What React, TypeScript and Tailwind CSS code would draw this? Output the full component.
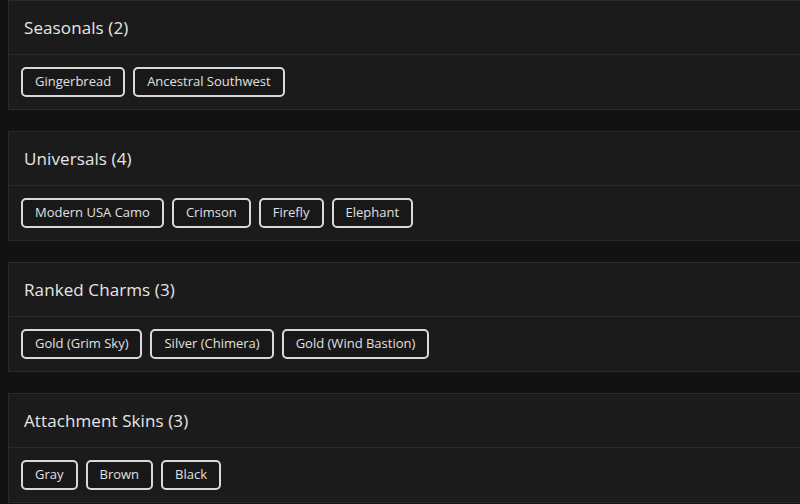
import React from "react";

const sections: { title: string; items: string[] }[] = [
  { title: "Seasonals (2)", items: ["Gingerbread", "Ancestral Southwest"] },
  { title: "Universals (4)", items: ["Modern USA Camo", "Crimson", "Firefly", "Elephant"] },
  { title: "Ranked Charms (3)", items: ["Gold (Grim Sky)", "Silver (Chimera)", "Gold (Wind Bastion)"] },
  { title: "Attachment Skins (3)", items: ["Gray", "Brown", "Black"] },
];

export default function App() {
  return (
    <div
      className="w-[800px] h-[504px] overflow-hidden bg-[#121212] pl-2"
      style={{ fontFamily: "'Open Sans', 'Liberation Sans', sans-serif" }}
    >
      <div className="flex flex-col gap-[21px] w-[820px]">
        {sections.map((s) => (
          <div key={s.title} className="border border-[#2a2a2a] bg-[#1b1b1b]">
            <div className="h-[54px] flex items-center px-[15px] border-b border-[#2a2a2a]">
              <span className="text-[17px] font-medium text-[#e6e6e6] tracking-[0.1px]">{s.title}</span>
            </div>
            <div className="h-[54px] flex items-center gap-2 px-3">
              {s.items.map((it) => (
                <div
                  key={it}
                  className="h-[30px] flex items-center px-[12px] border-2 border-[#d9d9d9] rounded-[5px] bg-[#181818] text-[13px] text-[#e0e0e0]"
                >
                  {it}
                </div>
              ))}
            </div>
          </div>
        ))}
      </div>
    </div>
  );
}
